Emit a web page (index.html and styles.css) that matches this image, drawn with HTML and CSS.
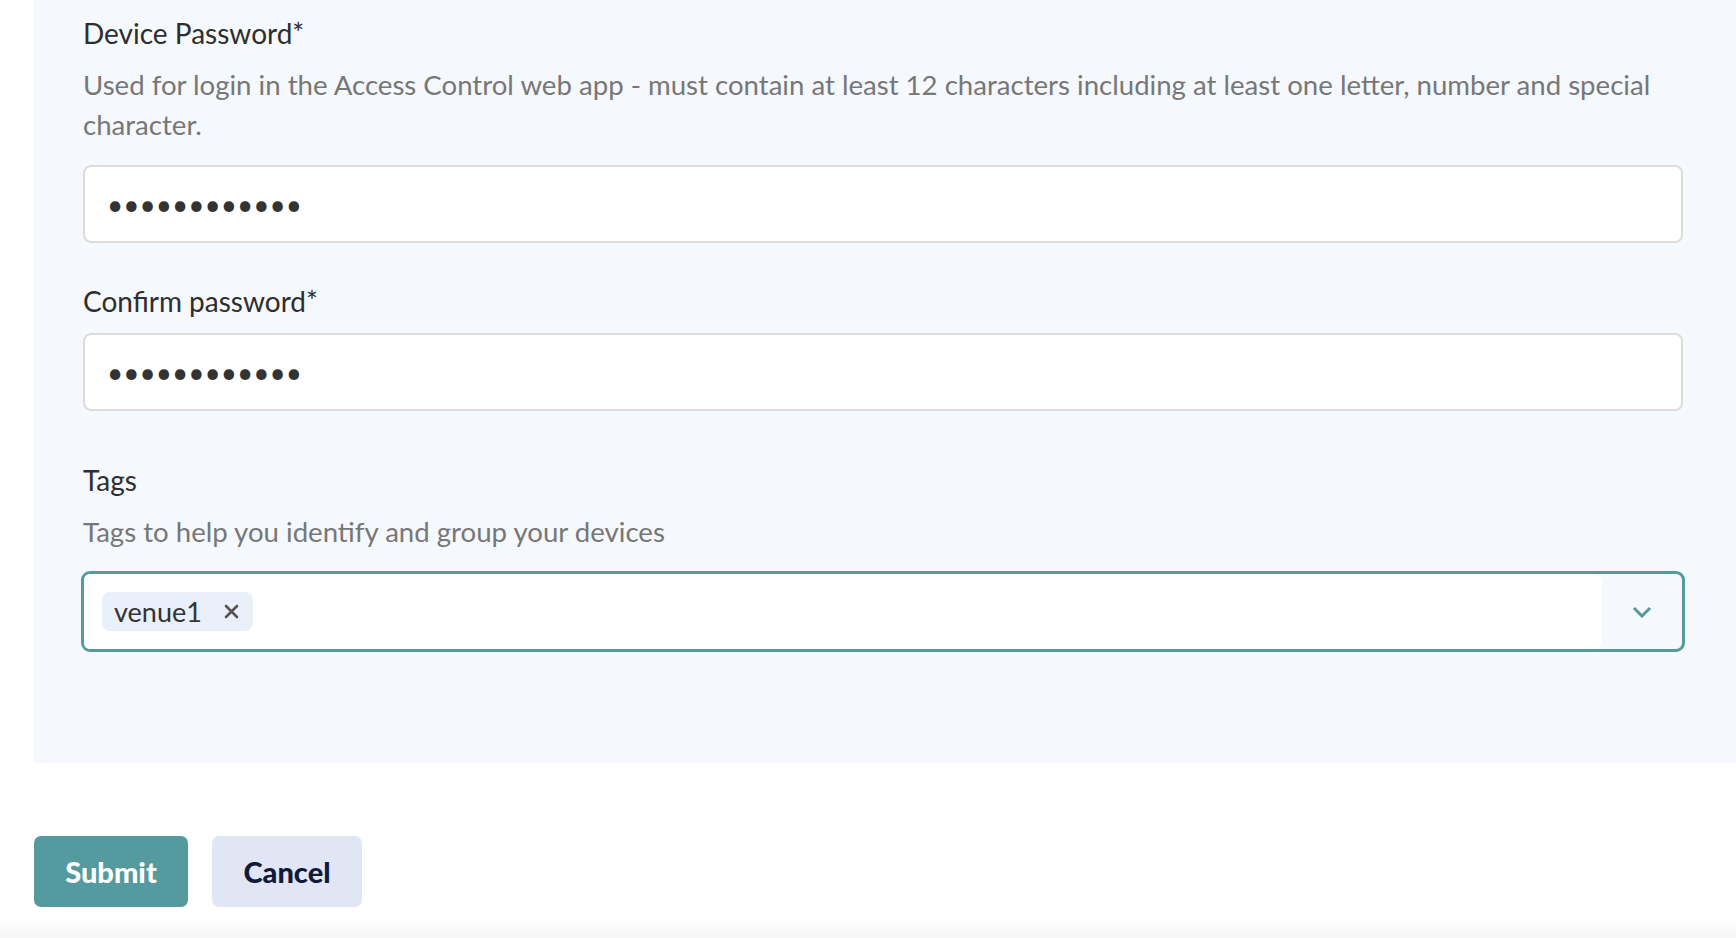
FILE: index.html
```html
<!DOCTYPE html>
<html lang="en">
<head>
    <meta charset="UTF-8">
    <meta name="viewport" content="width=device-width, initial-scale=1.0">
    <title>Add device</title>
    <link rel="stylesheet" href="styles.css">
</head>
<body>
    <main>
        <form class="device-form">
            <div class="form-panel">
                <div class="field">
                    <label class="field-label" for="password">Device Password*</label>
                    <p class="field-help">Used for login in the Access Control web app - must contain at least 12 characters including at least one letter, number and special character.</p>
                    <input class="text-input" id="password" type="password" value="abcdefghijkl">
                </div>

                <div class="field">
                    <label class="field-label" for="confirm">Confirm password*</label>
                    <input class="text-input" id="confirm" type="password" value="abcdefghijkl">
                </div>

                <div class="field field-tags">
                    <label class="field-label">Tags</label>
                    <p class="field-help">Tags to help you identify and group your devices</p>
                    <div class="tag-select">
                        <div class="tag-values">
                            <span class="tag-chip">venue1
                                <svg class="tag-remove" width="15" height="15" viewBox="0 0 15 15"><path d="M2 2l11 11M13 2L2 13" stroke="currentColor" stroke-width="2.6" stroke-linecap="round"/></svg>
                            </span>
                        </div>
                        <div class="tag-indicator">
                            <svg width="20" height="12" viewBox="0 0 20 12"><path d="M2 2l8 8 8-8" fill="none" stroke="currentColor" stroke-width="3"/></svg>
                        </div>
                    </div>
                </div>
            </div>

            <div class="form-actions">
                <button type="button" class="btn btn-primary">Submit</button>
                <button type="button" class="btn btn-secondary">Cancel</button>
            </div>
        </form>
    </main>
    <div class="page-bottom"></div>
</body>
</html>
```

FILE: styles.css
```css
:root {
    --primary-color: #559a9e;
    --panel-bg: #f5f8fd;
    --text-color: #333;
    --muted-color: #777;
    --border-color: #dcdcdc;
}

* {
    margin: 0;
    padding: 0;
    box-sizing: border-box;
}

html, body {
    height: 100%;
}

body {
    font-family: Lato, "Open Sans", sans-serif;
    background-color: #fff;
    color: var(--text-color);
    display: flex;
    flex-direction: column;
}

main {
    flex: 1;
}

.form-panel {
    margin-left: 34px;
    background-color: var(--panel-bg);
    padding: 13px 53px 111px 49px;
}

.field-label {
    display: block;
    font-size: 28px;
    line-height: 40px;
    color: #2e2e2e;
}

.field-help {
    font-size: 27.6px;
    line-height: 40px;
    color: var(--muted-color);
    margin-top: 12px;
}

.field + .field {
    margin-top: 38px;
}

.field.field-tags {
    margin-top: 49px;
}

.text-input {
    display: block;
    width: 100%;
    height: 78px;
    margin-top: 12px;
    padding: 0 22px;
    border: 2px solid var(--border-color);
    border-radius: 8px;
    background: #fff;
    font-family: Lato, sans-serif;
    font-size: 28px;
    color: #333;
    letter-spacing: 0;
    outline: none;
}

.field-help + .text-input {
    margin-top: 20px;
}

.tag-select {
    display: flex;
    height: 81px;
    margin: 19px -2px 0;
    border: 3px solid var(--primary-color);
    border-radius: 9px;
    background: var(--panel-bg);
    overflow: hidden;
}

.tag-values {
    flex: 1;
    display: flex;
    align-items: center;
    padding: 0 18px;
    background: #fff;
    border-radius: 0 8px 8px 0;
}

.tag-chip {
    display: inline-flex;
    align-items: center;
    height: 39px;
    padding: 0 14px 0 12px;
    gap: 22px;
    background: #e9f0f9;
    border-radius: 8px;
    font-size: 27px;
    color: #333;
}

.tag-remove {
    color: #555;
}

.tag-indicator {
    width: 80px;
    display: flex;
    align-items: center;
    justify-content: center;
    color: var(--primary-color);
}

.form-actions {
    display: flex;
    gap: 24px;
    margin: 73px 0 0 34px;
}

.btn {
    height: 71px;
    border: none;
    border-radius: 7px;
    font-family: Lato, sans-serif;
    font-size: 29px;
    font-weight: 900;
    cursor: pointer;
}

.btn-primary {
    width: 154px;
    background-color: var(--primary-color);
    color: #fff;
}

.btn-secondary {
    width: 150px;
    background-color: #e0e6f3;
    color: #121a3a;
}

.page-bottom {
    height: 18px;
    background: linear-gradient(#fff, #f6f6f6);
}
```
